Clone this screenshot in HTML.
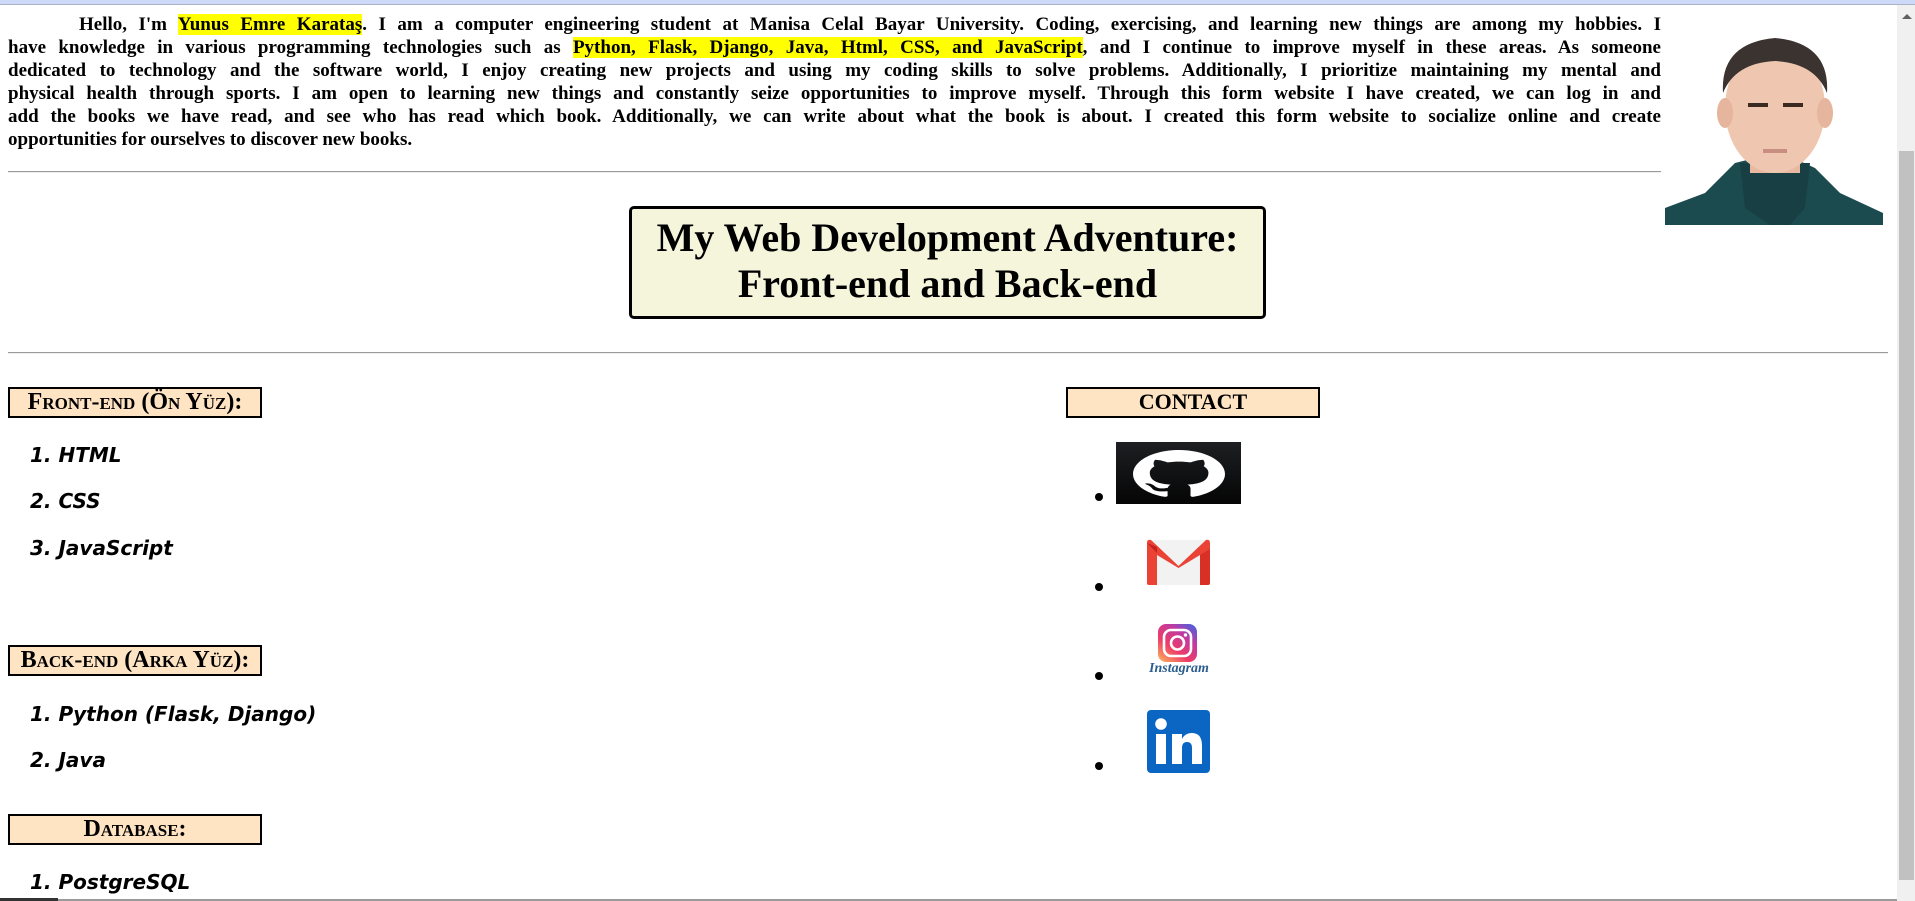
<!DOCTYPE html>
<html><head><meta charset="utf-8"><style>
*{margin:0;padding:0;box-sizing:border-box}
html,body{width:1915px;height:901px;overflow:hidden;background:#fff;position:relative}
.abs{position:absolute}
#topbar{left:0;top:0;width:1915px;height:5px;background:#cdd9f7;border-bottom:1px solid #a9b4cc}
#intro{left:8px;top:13px;width:1653px;font:bold 19px/23px "Liberation Serif",serif;color:#000;text-align:justify}
#intro div{text-align:justify;text-align-last:justify;white-space:nowrap;overflow:visible}
#intro div.last{text-align-last:left}
.hl{background:#ffff00}
.hr{height:2px;background:#9a9a9a;border-bottom:1px solid #eee}
#title{left:629px;top:206px;width:637px;height:113px;background:#f5f5dc;border:3px solid #000;border-radius:5px;font:bold 40px/46px "Liberation Serif",serif;text-align:center;padding-top:6px;color:#000}
.hd{width:254px;height:31px;background:#ffe4c4;border:2px solid #000;font:bold 24px/26px "Liberation Serif",serif;text-align:center;font-variant:small-caps;color:#000}
.li{left:30px;font:italic bold 20px/24px "DejaVu Sans",sans-serif;color:#000}
.bul{width:8px;height:8px;border-radius:50%;background:#000;left:1095px}
</style></head><body>
<div id="topbar" class="abs"></div>
<div id="intro" class="abs">
<div style="padding-left:71px">Hello, I'm <span class="hl">Yunus Emre Karataş</span>. I am a computer engineering student at Manisa Celal Bayar University. Coding, exercising, and learning new things are among my hobbies. I</div>
<div>have knowledge in various programming technologies such as <span class="hl">Python, Flask, Django, Java, Html, CSS, and JavaScript</span>, and I continue to improve myself in these areas. As someone</div>
<div>dedicated to technology and the software world, I enjoy creating new projects and using my coding skills to solve problems. Additionally, I prioritize maintaining my mental and</div>
<div>physical health through sports. I am open to learning new things and constantly seize opportunities to improve myself. Through this form website I have created, we can log in and</div>
<div>add the books we have read, and see who has read which book. Additionally, we can write about what the book is about. I created this form website to socialize online and create</div>
<div class="last">opportunities for ourselves to discover new books.</div>
</div>
<div class="abs hr" style="left:8px;top:171px;width:1653px"></div>
<svg class="abs" style="left:1665px;top:23px" width="218" height="202" viewBox="0 0 218 202">
<rect width="218" height="202" fill="#fff"/>
<path d="M0 202 L0 185 L40 170 L70 140 L90 135 L128 135 L150 145 L175 170 L218 190 L218 202Z" fill="#1b4a4f"/>
<path d="M75 140 L80 185 L105 202 L125 202 L140 185 L145 140 Z" fill="#173f44"/>
<rect x="85" y="105" width="50" height="45" fill="#e8b8a0"/>
<ellipse cx="110" cy="85" rx="50" ry="65" fill="#efc7b1"/>
<ellipse cx="60" cy="90" rx="8" ry="15" fill="#e6b59d"/>
<ellipse cx="160" cy="90" rx="8" ry="15" fill="#e6b59d"/>
<path d="M58 70 Q55 20 110 15 Q165 20 162 70 Q150 40 110 38 Q70 40 58 70Z" fill="#3a3330"/>
<path d="M83 82 h20 M118 82 h20" stroke="#3a2a20" stroke-width="4"/>
<path d="M98 128 h24" stroke="#c98e82" stroke-width="4"/>
</svg>
<div class="abs" style="left:1897px;top:5px;width:18px;height:896px;background:#f0f0f0"></div>
<div class="abs" style="left:1899px;top:151px;width:15px;height:729px;background:#c1c1c1"></div>
<div class="abs" style="left:1902px;top:14px;width:0;height:0;border-left:5px solid transparent;border-right:5px solid transparent;border-bottom:5px solid #606060"></div>
<div id="title" class="abs">My Web Development Adventure:<br>Front-end and Back-end</div>
<div class="abs hr" style="left:8px;top:352px;width:1880px"></div>

<div class="abs hd" style="left:8px;top:387px">Front-end (Ön Yüz):</div>
<div class="abs li" style="top:443px">1. HTML</div>
<div class="abs li" style="top:489px">2. CSS</div>
<div class="abs li" style="top:536px">3. JavaScript</div>
<div class="abs hd" style="left:8px;top:645px">Back-end (Arka Yüz):</div>
<div class="abs li" style="top:702px">1. Python (Flask, Django)</div>
<div class="abs li" style="top:748px">2. Java</div>
<div class="abs hd" style="left:8px;top:814px">Database:</div>
<div class="abs li" style="top:870px">1. PostgreSQL</div>

<div class="abs hd" style="left:1066px;top:387px;font-variant:normal;font-size:22px">CONTACT</div>
<div class="abs bul" style="top:493px"></div>
<div class="abs bul" style="top:583px"></div>
<div class="abs bul" style="top:672px"></div>
<div class="abs bul" style="top:762px"></div>
<svg class="abs" style="left:1116px;top:442px" width="125" height="62" viewBox="0 0 125 62">
<defs><linearGradient id="gg" x1="0" y1="0" x2="0" y2="1"><stop offset="0" stop-color="#1d1f22"/><stop offset="1" stop-color="#050505"/></linearGradient></defs>
<rect width="125" height="62" fill="url(#gg)"/>
<svg x="17" y="8" width="92" height="48" viewBox="0 0 16 16" preserveAspectRatio="none">
<path fill="#fff" d="M8 0C3.58 0 0 3.58 0 8c0 3.54 2.29 6.530 5.47 7.59.4.07.55-.17.55-.38 0-.19-.01-.82-.01-1.49-2.010.37-2.530-.49-2.690-.94-.09-.23-.48-.94-.82-1.130-.28-.15-.68-.52-.01-.53.63-.01 1.08.58 1.23.82.72 1.21 1.870.87 2.330.66.07-.52.28-.87.51-1.070-1.78-.2-3.640-.89-3.640-3.950 0-.87.31-1.590.82-2.150-.08-.2-.36-1.020.08-2.120 0 0 .67-.21 2.2.82.64-.18 1.32-.27 2-.27.68 0 1.36.09 2 .27 1.53-1.04 2.2-.82 2.2-.82.44 1.1.16 1.92.08 2.12.51.56.82 1.27.82 2.15 0 3.07-1.87 3.75-3.65 3.95.29.25.54.73.54 1.48 0 1.07-.01 1.93-.01 2.2 0 .21.15.46.55.38A8.013 8.013 0 0016 8c0-4.42-3.58-8-8-8z"/>
</svg></svg>
<svg class="abs" style="left:1146px;top:539px" width="65" height="47" viewBox="0 0 65 47">
<rect x="1" y="1" width="63" height="45" rx="3" fill="#f2f2f2"/>
<path d="M1 4 V44 Q1 46 3 46 H11 V14 Z" fill="#ea4335"/>
<path d="M64 4 V44 Q64 46 62 46 H54 V14 Z" fill="#d93025"/>
<path d="M1 4 Q1 0 5 1 L32.5 27 L60 1 Q64 0 64 4 V10 L32.5 29 L1 10 Z" fill="#ea4335"/>
<path d="M1 4 L11 14 V8Z" fill="#c5221f"/>
</svg>
<svg class="abs" style="left:1158px;top:624px" width="39" height="38" viewBox="0 0 39 38">
<defs><linearGradient id="ig" x1="0" y1="1" x2="0.8" y2="0"><stop offset="0" stop-color="#fdb85c"/><stop offset="0.4" stop-color="#ee3c67"/><stop offset="0.75" stop-color="#c13aa0"/><stop offset="1" stop-color="#5b5bd6"/></linearGradient></defs>
<rect width="39" height="38" rx="8" fill="url(#ig)"/>
<rect x="6" y="6" width="27" height="26" rx="7" fill="none" stroke="#fff" stroke-width="2.6"/>
<circle cx="19.5" cy="19" r="6.5" fill="none" stroke="#fff" stroke-width="2.6"/>
<circle cx="27.5" cy="11" r="1.7" fill="#fff"/>
</svg>
<div class="abs" style="left:1145px;top:660px;width:68px;text-align:center;font:italic bold 14px/18px 'Liberation Serif',serif;color:#2c5d8f">Instagram</div>
<svg class="abs" style="left:1147px;top:710px" width="63" height="63" viewBox="0 0 63 63">
<rect width="63" height="63" rx="4" fill="#0a66c2"/>
<rect x="9" y="24" width="10" height="30" fill="#fff"/>
<circle cx="14" cy="14" r="5.8" fill="#fff"/>
<path d="M25 24 H35 V29 Q38 23 45 23 Q55 23 55 36 V54 H45 V38 Q45 32 40 32 Q35 32 35 38 V54 H25Z" fill="#fff"/>
</svg>
<div class="abs" style="left:0;top:899px;width:1897px;height:2px;background:#9a9a9a"></div>
<div class="abs" style="left:0;top:898px;width:58px;height:3px;background:#333"></div>
</body></html>
